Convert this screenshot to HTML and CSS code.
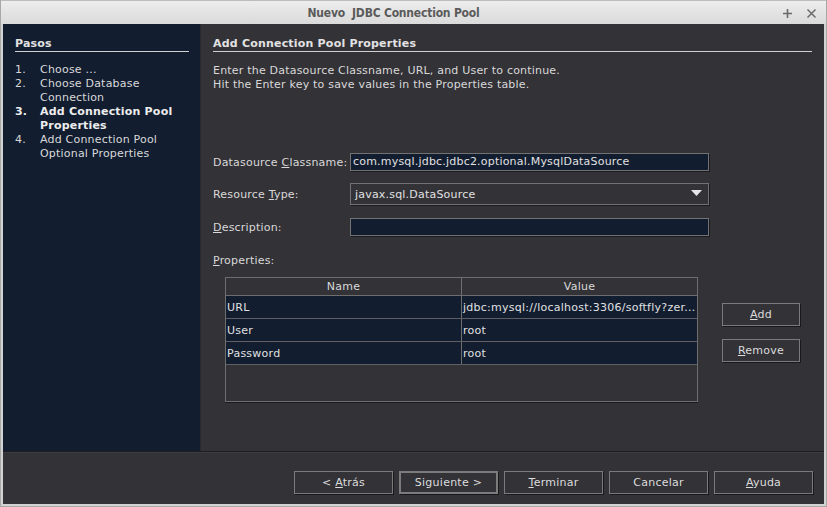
FILE: index.html
```html
<!DOCTYPE html>
<html>
<head>
<meta charset="utf-8">
<link rel="stylesheet" href="styles.css">
</head>
<body>
<div class="window">
  <div class="titlebar">
    <div class="title">Nuevo&nbsp; JDBC Connection Pool</div>
    <div class="tb-icons">
      <svg width="11" height="11" viewBox="0 0 11 11"><path d="M5.5 1v9M1 5.5h9" stroke="#6a6a6a" stroke-width="1.6"/></svg>
      <svg width="11" height="11" viewBox="0 0 11 11"><path d="M1.5 1.5l8 8M9.5 1.5l-8 8" stroke="#6a6a6a" stroke-width="1.5"/></svg>
    </div>
  </div>
  <div class="content">
    <div class="main">
      <aside class="steps">
        <div class="steps-title">Pasos</div>
        <ol class="step-list">
          <li><span class="num">1.</span><span class="txt">Choose ...</span></li>
          <li><span class="num">2.</span><span class="txt">Choose Database<br>Connection</span></li>
          <li class="current"><span class="num">3.</span><span class="txt">Add Connection Pool<br>Properties</span></li>
          <li><span class="num">4.</span><span class="txt">Add Connection Pool<br>Optional Properties</span></li>
        </ol>
      </aside>
      <section class="panel">
        <div class="panel-title">Add Connection Pool Properties</div>
        <p class="intro">Enter the Datasource Classname, URL, and User to continue.<br>Hit the Enter key to save values in the Properties table.</p>
        <div class="form">
          <label class="lbl row1">Datasource <u>C</u>lassname:</label>
          <div class="field row1">com.mysql.jdbc.jdbc2.optional.MysqlDataSource</div>
          <label class="lbl row2">Resource <u>T</u>ype:</label>
          <div class="combo row2"><span>javax.sql.DataSource</span>
            <svg width="11" height="6" viewBox="0 0 11 6"><path d="M0 0h11L5.5 6z" fill="#e6e6e6"/></svg>
          </div>
          <label class="lbl row3"><u>D</u>escription:</label>
          <div class="field row3"></div>
          <label class="lbl row4"><u>P</u>roperties:</label>
        </div>
        <div class="props">
          <div class="table">
            <div class="thead">
              <div class="c1">Name</div>
              <div class="c2">Value</div>
            </div>
            <div class="tr"><div class="c1">URL</div><div class="c2">jdbc:mysql://localhost:3306/softfly?zer...</div></div>
            <div class="tr"><div class="c1">User</div><div class="c2">root</div></div>
            <div class="tr"><div class="c1">Password</div><div class="c2">root</div></div>
          </div>
          <div class="side-btns">
            <button class="btn small"><u>A</u>dd</button>
            <button class="btn small"><u>R</u>emove</button>
          </div>
        </div>
      </section>
    </div>
    <div class="footer">
      <button class="btn">&lt; <u>A</u>trás</button>
      <button class="btn focused">Siguiente &gt;</button>
      <button class="btn"><u>T</u>erminar</button>
      <button class="btn">Cancelar</button>
      <button class="btn"><u>A</u>yuda</button>
    </div>
  </div>
</div>
</body>
</html>
```

FILE: styles.css
```css
* { box-sizing: border-box; }
html, body { margin: 0; padding: 0; }
body {
  width: 827px;
  height: 507px;
  overflow: hidden;
  background: #d4d4d4;
  font-family: "DejaVu Sans", sans-serif;
  font-size: 11px;
  color: #d9d9d9;
}
.window {
  width: 827px;
  height: 507px;
  display: flex;
  flex-direction: column;
  background: #d2d2d2;
  border: 1px solid #a8a8a8;
  border-top: none;
}
.titlebar {
  height: 24px;
  flex: none;
  display: flex;
  align-items: center;
  justify-content: center;
  position: relative;
  background: linear-gradient(#ededed, #dadada);
  border-top: 1px solid #bdbdbd;
  padding-right: 40px;
}
.title {
  font-family: "DejaVu Sans Condensed", "DejaVu Sans", sans-serif;
  font-weight: bold;
  font-size: 12px;
  letter-spacing: -0.2px;
  color: #5b5b5b;
  padding-top: 1px;
}
.tb-icons {
  position: absolute;
  right: 9px;
  top: 7px;
  display: flex;
  gap: 13px;
}
.content {
  flex: 1;
  margin: 0 2px 2px 2px;
  display: flex;
  flex-direction: column;
  background: #333237;
}
.main {
  height: 428px;
  display: flex;
  border-bottom: 1px solid #1d1d22;
}
.steps {
  width: 198px;
  flex: none;
  background: #121d30;
  padding: 12px 11px 0 12px;
  border-right: 1px solid #2a2a30;
}
.steps-title {
  font-weight: bold;
  line-height: 14px;
  padding-top: 1px;
  border-bottom: 1px solid #d0d0d0;
  color: #e2e2e2;
  letter-spacing: 0.2px;
}
.step-list {
  list-style: none;
  margin: 11px 0 0 0;
  padding: 0;
  letter-spacing: 0.2px;
}
.step-list li {
  display: flex;
  line-height: 14px;
}
.step-list .num { width: 25px; flex: none; }
.step-list .current { font-weight: bold; color: #ededed; }
.panel {
  flex: 1;
  padding: 12px 12px 0 12px;
  letter-spacing: 0.2px;
}
.panel-title {
  font-weight: bold;
  line-height: 14px;
  padding-top: 1px;
  border-bottom: 1px solid #d0d0d0;
  color: #e2e2e2;
}
.intro {
  margin: 12px 0 0 0;
  line-height: 14px;
}
.form {
  margin-top: 61px;
  display: grid;
  grid-template-columns: 137px 359px;
  grid-template-rows: 18px 12px 22px 13px 18px 17px 14px;
}
.lbl { grid-column: 1; align-self: center; white-space: nowrap; line-height: 14px; padding-top: 2px; }
.row1 { grid-row: 1; }
.row2 { grid-row: 3; }
.row3 { grid-row: 5; }
.row4 { grid-row: 7; }
.lbl.row4 { padding-top: 1px; }
.field {
  grid-column: 2;
  background: #121d30;
  border: 1px solid #727272;
  box-shadow: 1px 1px 0 #1a1a20;
  padding: 0 2px;
  line-height: 16px;
  white-space: nowrap;
  color: #e0e0e0;
}
.combo {
  grid-column: 2;
  border: 1px solid #727272;
  box-shadow: 1px 1px 0 #1a1a20;
  display: flex;
  align-items: center;
  justify-content: space-between;
  padding: 0 6px 0 4px;
  color: #e0e0e0;
}
.combo svg { margin-top: -2px; }
.props {
  margin: 10px 0 0 12px;
  display: flex;
  align-items: flex-start;
  gap: 24px;
}
.table {
  width: 473px;
  height: 125px;
  border: 1px solid #6e6e6e;
  box-shadow: 0 1px 0 #1a1a20;
  letter-spacing: 0.25px;
}
.thead, .tr { display: flex; }
.thead {
  height: 18px;
  line-height: 17px;
  border-bottom: 1px solid #6e6e6e;
  text-align: center;
}
.tr {
  height: 23px;
  line-height: 21px;
  padding-top: 1px;
  background: #121d30;
  border-bottom: 1px solid #5e5e64;
  color: #e0e0e0;
}
.c1 { width: 236px; flex: none; border-right: 1px solid #6e6e6e; padding-left: 1px; }
.tr .c1 { margin-top: -1px; padding-top: 1px; }
.c2 { flex: 1; padding-left: 1px; white-space: nowrap; overflow: hidden; }
.tr .c2 { margin-top: -1px; padding-top: 1px; }
.thead .c1, .thead .c2 { padding-left: 0; }
.side-btns {
  margin-top: 26px;
  display: flex;
  flex-direction: column;
  gap: 13px;
}
.btn {
  font-family: "DejaVu Sans", sans-serif;
  font-size: 11px;
  letter-spacing: 0.25px;
  color: #dcdcdc;
  background: #333237;
  border: 1px solid #7a7a7a;
  box-shadow: 1px 1px 0 #18181d;
  width: 99px;
  height: 23px;
  padding: 0;
  margin: 0;
}
.btn.small { width: 78px; }
.btn.focused { border: 2px solid #7c7c7c; }
.footer {
  flex: 1;
  display: flex;
  justify-content: flex-end;
  gap: 6px;
  padding: 18px 11px 0 0;
  border-top: 1px solid #3c3c42;
}
```
